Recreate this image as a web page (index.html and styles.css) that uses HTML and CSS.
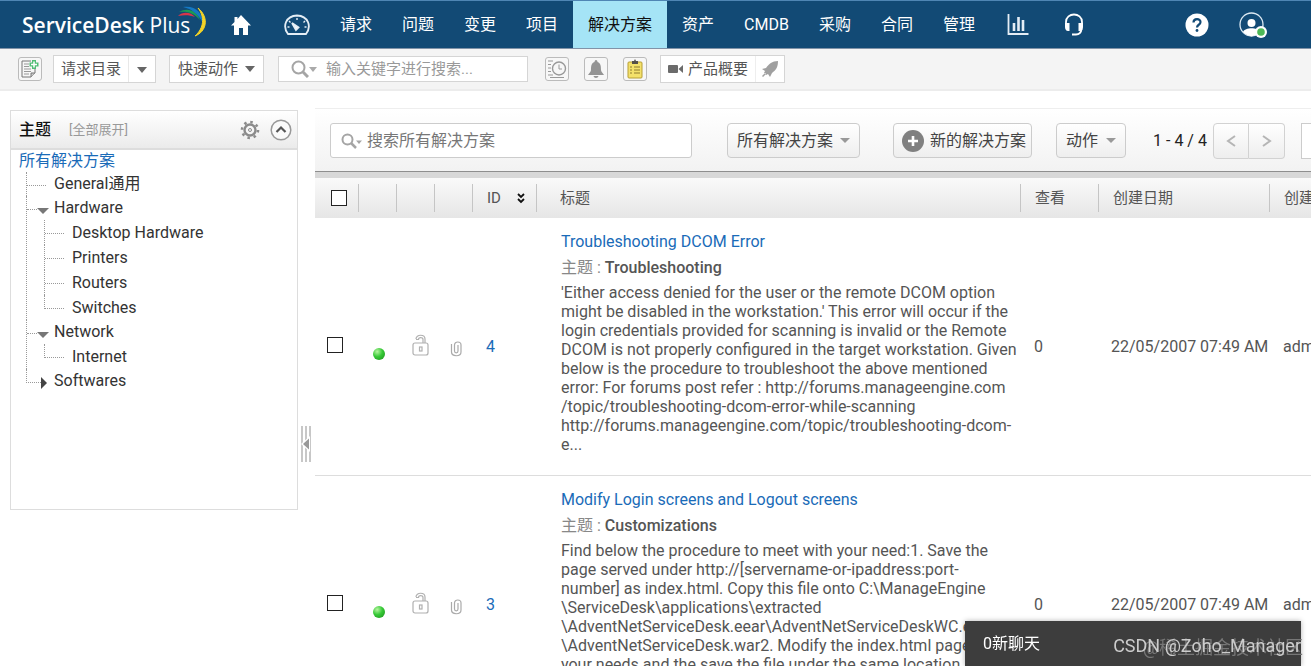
FILE: index.html
```
<!DOCTYPE html>
<html lang="zh-CN">
<head>
    <meta charset="UTF-8">
    <meta name="viewport" content="width=device-width, initial-scale=1.0">
    <title>ServiceDesk Plus</title>
    <link rel="stylesheet" href="styles.css">
</head>
<body>
    <header class="topbar">
        <a href="#" class="logo"><b>ServiceDesk</b> Plus
            <svg class="logo-arc" width="32" height="34" viewBox="0 0 32 34" fill="none">
                <path d="M2 11C7 6 15 7 19 12C14 10 8 10 2 11Z" fill="#d8354a"/>
                <path d="M3 7C12 2 21 6 24 15C18 8 11 6 3 7Z" fill="#1c9a55"/>
                <path d="M7 2C19 0 27 8 27 18C22 9 16 4 7 2Z" fill="#1579c4"/>
                <path d="M22 3C34 13 30 27 19 31C28 23 29 12 22 3Z" fill="#f3d327" stroke="#f3d327"/>
            </svg>
        </a>
        <a href="#" class="nav-icon home" aria-label="Home">
            <svg width="22" height="22" viewBox="0 0 22 22"><path d="M11 1L21 11.500H18V21H13V14H9V21H4V11.500H1L4.500 8V3H7.500V5Z" fill="#fff"/></svg>
        </a>
        <a href="#" class="nav-icon gauge" aria-label="Dashboard">
            <svg width="26" height="22" viewBox="0 0 26 22" fill="none" stroke="#e4edf5" stroke-width="1.800"><path d="M4 20C-2 12 2 2 13 1.500C24 2 28 12 22 20Z"/><path d="M13 4V6M5 7L6.500 8.500M3.500 13H5.500M21 7L19.500 8.500M22.500 13H20.500" stroke-width="1.400"/><path d="M8 9L14.500 13.500L12 16Z" fill="#fff"/></svg>
        </a>
        <nav class="nav">
            <a href="#">请求</a>
            <a href="#">问题</a>
            <a href="#">变更</a>
            <a href="#">项目</a>
            <a href="#" class="active">解决方案</a>
            <a href="#">资产</a>
            <a href="#">CMDB</a>
            <a href="#">采购</a>
            <a href="#">合同</a>
            <a href="#">管理</a>
        </nav>
        <a href="#" class="nav-icon" aria-label="Reports">
            <svg width="22" height="22" viewBox="0 0 22 22" fill="none" stroke="#e4edf5"><path d="M1.500 0V20H21.500" stroke-width="1.800"/><path d="M7 17V9M11.500 17V3M16 17V6" stroke-width="2.600"/></svg>
        </a>
        <a href="#" class="nav-icon" aria-label="Support">
            <svg width="20" height="24" viewBox="0 0 20 24" fill="none" stroke="#fff"><path d="M2 12V9C2 -1 18 -1 18 9V12" stroke-width="1.800"/><path d="M1 10H5.500V18H4C2 18 1 16 1 14ZM19 10H14.500V18H16C18 18 19 16 19 14Z" fill="#fff" stroke="none"/><path d="M17.500 16C17 20 15 21.500 12 21.500M8 21.500H13" stroke-width="2"/></svg>
        </a>
        <div class="topbar-right">
            <a href="#" aria-label="Help">
                <svg width="24" height="24" viewBox="0 0 24 24" fill="none"><circle cx="12" cy="12" r="11.500" fill="#fff"/><path d="M8.500 9.500C8.500 5 15.500 5 15.500 9C15.500 12 12 11.500 12 14.500" stroke="#124a75" stroke-width="2.200"/><circle cx="12" cy="17.500" r="1.400" fill="#124a75"/></svg>
            </a>
            <a href="#" aria-label="Profile">
                <svg width="28" height="26" viewBox="0 0 28 26"><circle cx="12.500" cy="12.500" r="11.500" fill="none" stroke="#dce9f3" stroke-width="1.300"/><circle cx="12.500" cy="11" r="4" fill="#fff"/><path d="M4 20C6 15 19 15 21 20C16 25.500 9 25.500 4 20Z" fill="#fff"/><circle cx="22" cy="20" r="6" fill="#fff"/><circle cx="22" cy="20" r="3.800" fill="#4db857"/></svg>
            </a>
        </div>
    </header>

    <div class="subbar">
        <button class="icon-btn" aria-label="New request">
            <svg width="20" height="20" viewBox="0 0 20 20" fill="none" stroke="#777"><path d="M11 2H2V18H11L15 14V10" /><path d="M4 5H9M4 7.500H9M4 10H11M4 12.500H11M4 15H9" stroke="#999"/><path d="M11 18V14H15" fill="#ccc"/><path d="M14 1V10M9.500 5.500H18.500" stroke="#52bd76" stroke-width="4"/><path d="M14 2.500V8.500M11 5.500H17" stroke="#fff" stroke-width="1.500"/></svg>
        </button>
        <div class="split-btn catalog">
            <button>请求目录</button>
            <button class="split-arrow" aria-label="展开"><span class="caret"></span></button>
        </div>
        <button class="box-btn quick">快速动作 <span class="caret"></span></button>
        <div class="top-search">
            <svg width="18" height="18" viewBox="0 0 18 18" fill="none" stroke="#a5a5a5" stroke-width="2"><circle cx="7.500" cy="7.500" r="6"/><path d="M12 12L17 17" stroke-width="3"/></svg>
            <span class="caret light"></span>
            <input type="text" placeholder="输入关键字进行搜索..." aria-label="搜索">
        </div>
        <div class="icon-group">
            <button class="icon-btn" aria-label="Recent items">
                <svg width="20" height="20" viewBox="0 0 20 20" fill="none" stroke="#999"><circle cx="12" cy="9.500" r="6.500" stroke-width="1.400"/><path d="M12 5.500V10H15M1 2H6M1 5.500H4M1 9H4M1 12.500H4M1 16H6M3 18.500H17"/></svg>
            </button>
            <button class="icon-btn" aria-label="Reminders">
                <svg width="18" height="20" viewBox="0 0 18 20" fill="#949494"><path d="M9 1C10 1 10.500 2 10.500 3C14 4 14 8 14 11C14 13 16 14 17 16H1C2 14 4 13 4 11C4 8 4 4 7.500 3C7.500 2 8 1 9 1ZM6.500 17H11.500C11 19.500 7 19.500 6.500 17Z"/></svg>
            </button>
            <button class="icon-btn" aria-label="Tasks">
                <svg width="18" height="20" viewBox="0 0 18 20"><rect x="2" y="3" width="14" height="16" rx="1" fill="#f4e16b" stroke="#b79f35"/><path d="M6 2H8L9 0L10 2H12V5H6Z" fill="#55504a"/><path d="M4 8H6M8 8H14M4 11H6M8 11H14M4 14H6M8 14H14" stroke="#8f7d30"/></svg>
            </button>
        </div>
        <div class="split-btn">
            <button class="overview"><svg width="16" height="10" viewBox="0 0 16 10" fill="#6b6b6b"><rect y="1" width="10" height="8" rx="1"/><path d="M10.500 5L15 1V9Z"/></svg>产品概要</button>
            <button class="rocket" aria-label="Getting started"><svg width="18" height="18" viewBox="0 0 18 18" fill="#a0a0a0"><path d="M17 1C11 1 8 4 5 8L1 9L4 11L3 13L5 15L7 14L9 17L11 13C15 10 17 7 17 1ZM1 16L4 13L5 14L2 17Z"/></svg></button>
        </div>
    </div>

    <div class="content">
        <aside class="sidebar">
            <div class="sidebar-head">
                <h2>主题</h2>
                <a href="#" class="expand-all">[全部展开]</a>
                <button class="plain-btn" aria-label="设置">
                    <svg width="20" height="20" viewBox="0 0 20 20" fill="none" stroke="#8b8b8b"><circle cx="10" cy="10" r="5.500" stroke-width="2.400"/><circle cx="10" cy="10" r="8" stroke-width="2.600" stroke-dasharray="2.500 3.783"/><circle cx="10" cy="10" r="1.500"/></svg>
                </button>
                <button class="plain-btn" aria-label="收起">
                    <svg width="22" height="22" viewBox="0 0 22 22" fill="none"><circle cx="11" cy="11" r="9.800" fill="#fafafa" stroke="#999" stroke-width="1.500"/><path d="M6.500 13L11 8.500L15.500 13" stroke="#555" stroke-width="2.200"/></svg>
                </button>
            </div>
            <a href="#" class="all-link">所有解决方案</a>
            <ul class="tree">
                <li><div class="node"><span class="branch"></span><a href="#">General通用</a></div></li>
                <li>
                    <div class="node open"><span class="branch"></span><a href="#">Hardware</a></div>
                    <ul>
                        <li><div class="node"><span class="branch"></span><a href="#">Desktop Hardware</a></div></li>
                        <li><div class="node"><span class="branch"></span><a href="#">Printers</a></div></li>
                        <li><div class="node"><span class="branch"></span><a href="#">Routers</a></div></li>
                        <li><div class="node"><span class="branch"></span><a href="#">Switches</a></div></li>
                    </ul>
                </li>
                <li>
                    <div class="node open"><span class="branch"></span><a href="#">Network</a></div>
                    <ul>
                        <li><div class="node"><span class="branch"></span><a href="#">Internet</a></div></li>
                    </ul>
                </li>
                <li><div class="node closed"><span class="branch"></span><a href="#">Softwares</a></div></li>
            </ul>
        </aside>

        <div class="splitter">
            <svg width="10" height="36" viewBox="0 0 10 36"><path d="M1 0V36M5 0V36M9 0V36" stroke="#b5b5b5" stroke-width="1.500"/><path d="M0 18L9 10V26Z" fill="#fff"/><path d="M2 18L8 12.500V23.500Z" fill="#999"/></svg>
        </div>

        <main class="main">
            <div class="list-bar">
                <div class="list-search">
                    <svg width="22" height="16" viewBox="0 0 22 16" fill="none" stroke="#a5a5a5" stroke-width="2"><circle cx="6.500" cy="6.500" r="5"/><path d="M10 10L15 15" stroke-width="2.500"/><path d="M15 7.500H21L18 11Z" fill="#a5a5a5" stroke="none"/></svg>
                    <input type="text" placeholder="搜索所有解决方案" aria-label="搜索所有解决方案">
                </div>
                <div class="grad-btn filter">
                    <select aria-label="筛选">
                        <option>所有解决方案</option>
                    </select>
                    <span class="caret mid"></span>
                </div>
                <button class="grad-btn new-btn">
                    <svg width="22" height="22" viewBox="0 0 22 22"><circle cx="11" cy="11" r="11" fill="#808080"/><path d="M11 6V16M6 11H16" stroke="#fff" stroke-width="2.600"/></svg>
                    新的解决方案
                </button>
                <button class="grad-btn actions">动作 <span class="caret mid"></span></button>
                <span class="count">1 - 4 / 4</span>
                <div class="pager">
                    <button aria-label="上一页"><svg width="10" height="12" viewBox="0 0 10 12" fill="none" stroke="#b5b5b5" stroke-width="2"><path d="M9 1L2 6L9 11"/></svg></button>
                    <button aria-label="下一页"><svg width="10" height="12" viewBox="0 0 10 12" fill="none" stroke="#b5b5b5" stroke-width="2"><path d="M1 1L8 6L1 11"/></svg></button>
                </div>
                <input type="text" class="page-size" aria-label="每页条数">
            </div>

            <table class="list">
                <colgroup>
                    <col class="c-check"><col class="c-icon"><col class="c-icon"><col class="c-icon">
                    <col class="c-id"><col><col class="c-views"><col class="c-date"><col class="c-by">
                </colgroup>
                <thead>
                    <tr>
                        <th class="check"><input type="checkbox" aria-label="全选"></th>
                        <th><div></div></th>
                        <th><div></div></th>
                        <th><div></div></th>
                        <th><div class="id-head">ID <svg width="8" height="11" viewBox="0 0 8 11" fill="none" stroke="#111" stroke-width="1.800"><path d="M1 1L4 4L7 1M1 6L4 9L7 6"/></svg></div></th>
                        <th><div class="title-head">标题</div></th>
                        <th><div>查看</div></th>
                        <th><div>创建日期</div></th>
                        <th><div>创建者</div></th>
                    </tr>
                </thead>
                <tbody>
                    <tr>
                        <td class="row-check"><input type="checkbox" aria-label="选择 4"></td>
                        <td class="status"><span class="dot"></span></td>
                        <td class="lock"><svg width="18" height="22" viewBox="0 0 18 22" fill="none" stroke="#b0b0b0" stroke-width="1.200"><rect x="1" y="9" width="15" height="12" rx="2"/><path d="M4 5C4 0 13 0 13 5V9M11 9V5.500C11 3 6.500 3 6.500 5.500H4"/><rect x="7.500" y="13" width="2.500" height="4"/></svg></td>
                        <td class="clip"><svg width="12" height="16" viewBox="0 0 12 16" fill="none" stroke="#aaa" stroke-width="1.200"><path d="M8 4V10C8 12.500 4.500 12.500 4.500 10V4C4.500 0 11 0 11 4V11C11 16 1.500 16 1.500 11V3"/></svg></td>
                        <td class="id"><a href="#">4</a></td>
                        <td class="title">
                            <a href="#">Troubleshooting DCOM Error</a>
                            <p class="topic">主题 : <b>Troubleshooting</b></p>
                            <p class="text">'Either access denied for the user or the remote DCOM option<br>
                                might be disabled in the workstation.' This error will occur if the<br>
                                login credentials provided for scanning is invalid or the Remote<br>
                                DCOM is not properly configured in the target workstation. Given<br>
                                below is the procedure to troubleshoot the above mentioned<br>
                                error: For forums post refer : http://forums.manageengine.com<br>
                                /topic/troubleshooting-dcom-error-while-scanning<br>
                                http://forums.manageengine.com/topic/troubleshooting-dcom-<br>
                                e...</p>
                        </td>
                        <td class="views">0</td>
                        <td class="date">22/05/2007 07:49 AM</td>
                        <td class="by">administrator</td>
                    </tr>
                    <tr>
                        <td class="row-check"><input type="checkbox" aria-label="选择 3"></td>
                        <td class="status"><span class="dot"></span></td>
                        <td class="lock"><svg width="18" height="22" viewBox="0 0 18 22" fill="none" stroke="#b0b0b0" stroke-width="1.200"><rect x="1" y="9" width="15" height="12" rx="2"/><path d="M4 5C4 0 13 0 13 5V9M11 9V5.500C11 3 6.500 3 6.500 5.500H4"/><rect x="7.500" y="13" width="2.500" height="4"/></svg></td>
                        <td class="clip"><svg width="12" height="16" viewBox="0 0 12 16" fill="none" stroke="#aaa" stroke-width="1.200"><path d="M8 4V10C8 12.500 4.500 12.500 4.500 10V4C4.500 0 11 0 11 4V11C11 16 1.500 16 1.500 11V3"/></svg></td>
                        <td class="id"><a href="#">3</a></td>
                        <td class="title">
                            <a href="#">Modify Login screens and Logout screens</a>
                            <p class="topic">主题 : <b>Customizations</b></p>
                            <p class="text">Find below the procedure to meet with your need:1. Save the<br>
                                page served under http://[servername-or-ipaddress:port-<br>
                                number] as index.html. Copy this file onto C:\ManageEngine<br>
                                \ServiceDesk\applications\extracted<br>
                                \AdventNetServiceDesk.eear\AdventNetServiceDeskWC.ear<br>
                                \AdventNetServiceDesk.war2. Modify the index.html page to<br>
                                your needs and the save the file under the same location.<br>
                                3. Restart the ServiceDesk Plus server for the changes<br>
                                to take effect...</p>
                        </td>
                        <td class="views">0</td>
                        <td class="date">22/05/2007 07:49 AM</td>
                        <td class="by">administrator</td>
                    </tr>
                </tbody>
            </table>
        </main>
    </div>

    <div class="chat-bar">
        <button>0新聊天</button>
    </div>
    <div class="mark mark-back">@稀土掘金技术社区</div>
    <div class="mark">CSDN @Zoho_Manager</div>
</body>
</html>
```

FILE: styles.css
```
* { box-sizing: border-box; }
body {
    margin: 0;
    height: 100vh;
    overflow: hidden;
    display: flex;
    flex-direction: column;
    font-family: Roboto, "Noto Sans CJK SC", sans-serif;
    font-size: 15px;
    line-height: 20px;
    color: #555;
    background: #fff;
}
a { color: #1a6bb8; text-decoration: none; }
p, h2, ul { margin: 0; padding: 0; }
ul { list-style: none; }
svg { display: block; flex: none; }
button, input, select { font: inherit; color: inherit; }
button { background: none; border: 0; padding: 0; cursor: pointer; white-space: nowrap; }
input[type="text"] { border: 0; outline: 0; padding: 0; background: none; min-width: 0; }
input::placeholder { color: #999; opacity: 1; }

.caret {
    display: inline-block;
    vertical-align: middle;
    border: 5px solid transparent;
    border-top: 6px solid #666;
    border-bottom: 0;
}
.caret.mid { border-width: 5px 5px 0; border-top-color: #999; }
.caret.light { border-width: 5px 4px 0; border-top-color: #aaa; }

/* top navigation */
.topbar {
    flex: none;
    display: flex;
    align-items: center;
    height: 49px;
    background: #124a75;
    border-top: 1px solid #4f86b4;
    border-bottom: 1px solid #8193a8;
}
.logo {
    position: relative;
    width: 208px;
    margin-right: 10px;
    padding-left: 22px;
    color: #fff;
    font-family: "Open Sans", sans-serif;
    font-size: 21px;
    line-height: 28px;
    font-weight: 400;
    white-space: nowrap;
}
.logo b { font-weight: 600; }
.logo-arc { position: absolute; right: 0; top: -6px; }
.nav-icon { flex: none; width: 56px; display: flex; justify-content: center; }
.nav-icon.home { width: 46px; }
.nav-icon.gauge { width: 61px; padding-left: 5px; }
.nav { display: flex; height: 100%; }
.nav a {
    display: flex;
    align-items: center;
    padding: 0 15px;
    color: #fff;
    font-size: 16px;
    white-space: nowrap;
}
.nav a.active { background: #a5e4f6; color: #111; }
.topbar-right { display: flex; align-items: center; gap: 30px; margin-left: auto; padding-right: 44px; }

/* tool strip */
.subbar {
    flex: none;
    display: flex;
    align-items: center;
    height: 42px;
    padding: 0 18px;
    background: #f4f4f4;
    border-bottom: 2px solid #ececec;
}
.icon-btn {
    width: 24px;
    height: 24px;
    display: flex;
    align-items: center;
    justify-content: center;
    background: #f7f7f7;
    border: 1px solid #bbb;
    border-radius: 3px;
}
.split-btn, .box-btn, .top-search {
    display: flex;
    align-items: center;
    height: 28px;
    background: #fff;
    border: 1px solid #d5d5d5;
}
.split-btn button { height: 100%; padding: 0 7px; }
.split-btn .split-arrow { padding: 0 8px; border-left: 1px solid #e8e8e8; }
.catalog { margin-left: 11px; }
.quick { gap: 7px; margin-left: 13px; padding: 0 8px; }
.top-search { width: 250px; height: 26px; margin-left: 14px; padding-left: 12px; }
.top-search input { flex: 1; margin-left: 9px; }
.icon-group { display: flex; gap: 15px; margin: 0 13px 0 17px; }
.split-btn .overview { display: flex; align-items: center; gap: 4px; }
.split-btn .rocket { border-left: 1px solid #eee; padding: 0 5px; }

.content { flex: 1; min-height: 0; display: flex; align-items: flex-start; padding: 17px 0 0 10px; }

/* topics */
.sidebar {
    flex: none;
    width: 288px;
    min-height: 400px;
    margin-top: 2px;
    border: 1px solid #ddd;
}
.sidebar-head {
    display: flex;
    align-items: center;
    height: 39px;
    padding: 0 5px 0 8px;
    background: linear-gradient(#fff, #ebebeb);
    border-bottom: 2px solid #ddd;
}
.sidebar-head h2 { font-size: 16px; font-weight: 500; color: #111; }
.expand-all { flex: 1; margin-left: 18px; font-size: 13px; color: #999; }
.plain-btn + .plain-btn { margin-left: 10px; }
.all-link { display: block; padding-left: 8px; font-size: 16px; line-height: 22px; }
.tree { padding-left: 15px; font-size: 16px; }
.tree ul { padding-left: 17px; }
.tree li { border-left: 1px dotted #999; }
.tree li:last-child { border-left: 0; }
.node { display: flex; height: 24px; align-items: center; }
.tree ul .node { height: 25px; }
.node a { order: 2; color: #333; line-height: 24px; white-space: nowrap; }
.branch { width: 19px; height: 14px; align-self: flex-start; margin-right: 8px; border-bottom: 1px dotted #999; }
.tree li:last-child > .node .branch { width: 20px; border-left: 1px dotted #999; }
.node.open .branch, .node.closed .branch { width: 10px; margin-right: 0; }
.tree li:last-child > .node.closed .branch { width: 15px; margin-right: 0; }
.node.open::after, .node.closed::after { content: ""; order: 1; }
.node.open::after { border: 6px solid transparent; border-top-color: #777; border-bottom: 0; margin: 6px 5px 0 0; }
.node.closed::after { border: 6px solid transparent; border-left-color: #444; border-right: 0; margin: 4px 7px 0 0; }

.splitter { flex: none; width: 17px; padding: 318px 0 0 3px; }

/* solution list */
.main { flex: 1; min-width: 0; overflow: hidden; align-self: stretch; }
.list-bar {
    display: flex;
    align-items: center;
    width: calc(100% + 60px);
    height: 70px;
    padding: 0 0 4px 15px;
    background: linear-gradient(#fff, #f2f2f2);
    border-top: 1px solid #eee;
    border-bottom: 6px solid #d8d8d8;
    box-shadow: inset 0 -1px 0 #8e8e8e;
    color: #444;
    font-size: 16px;
}
.list-bar > * { flex: none; }
.list-bar .list-search {
    flex: 1 1 362px;
    max-width: 362px;
    height: 35px;
    display: flex;
    align-items: center;
    padding-left: 10px;
    background: #fff;
    border: 1px solid #ccc;
    border-radius: 3px;
}
.list-search input { flex: 1; margin-left: 4px; }
.list-search input::placeholder { color: #777; }
.list-bar > * { margin-top: 4px; }
.grad-btn {
    display: flex;
    align-items: center;
    height: 35px;
    padding: 0 9px;
    background: linear-gradient(#fff, #eee);
    border: 1px solid #ccc;
    border-radius: 4px;
}
.filter { margin-left: 35px; }
.filter select { appearance: none; border: 0; background: none; padding: 0; margin-right: 6px; outline: 0; }
.new-btn { margin-left: 33px; padding: 0 5px 0 8px; gap: 6px; }
.actions { gap: 8px; margin-left: 24px; }
.count { width: 60px; margin-left: 27px; color: #222; white-space: nowrap; }
.pager { display: flex; }
.pager button {
    width: 36px;
    height: 36px;
    display: flex;
    align-items: center;
    justify-content: center;
    background: linear-gradient(#fff, #eee);
    border: 1px solid #d2d2d2;
    border-radius: 4px 0 0 4px;
}
.pager button + button { border-left: 0; border-radius: 0 4px 4px 0; }
.list-bar .page-size { width: 60px; height: 36px; margin-left: 16px; background: #fff; border: 1px solid #ccc; }

.list { table-layout: fixed; width: calc(100% + 89px); border-collapse: collapse; }
.c-check { width: 43px; }
.c-icon { width: 38px; }
.c-id { width: 64px; }
.c-views { width: 78px; }
.c-date { width: 171px; }
.c-by { width: 131px; }
.list th { height: 40px; padding: 0; font-weight: 400; text-align: left; }
.list thead tr { background: linear-gradient(#fafafa, #e6e6e6); }
.list th div {
    display: flex;
    align-items: center;
    height: 28px;
    padding-left: 14px;
    border-left: 1px solid #c5c5c5;
}
.list th .id-head { gap: 16px; }
.list th .title-head { padding-left: 23px; }
.list tbody tr { border-bottom: 1px solid #ddd; }
.list td { padding: 0 0 0 14px; vertical-align: middle; white-space: nowrap; font-size: 16px; }
.list input[type="checkbox"] {
    appearance: none;
    display: block;
    width: 16px;
    height: 16px;
    margin: 0;
    background: #fff;
    border: 1px solid #222;
}
.list th.check { padding-left: 16px; }
.list td.row-check { padding: 0 0 4px 12px; }
.list .status { padding: 14px 0 0 15px; }
.dot {
    display: block;
    width: 12px;
    height: 12px;
    border-radius: 50%;
    background: radial-gradient(circle at 35% 30%, #b6f5a0, #36c936 45%, #1c8d1c);
}
.list .lock { padding: 0 0 4px 16px; }
.list .clip { padding: 4px 0 0 16px; }
.list .title { padding: 11px 0 21px 25px; }
.title a { display: block; line-height: 26px; }
.topic { line-height: 26px; color: #888; }
.topic b { font-weight: 500; color: #555; }
.text { padding-top: 2px; line-height: 19px; }
.list .date { padding-left: 13px; }

/* chat */
.chat-bar {
    position: fixed;
    right: 10px;
    bottom: 0;
    width: 336px;
    height: 45px;
    padding-left: 18px;
    display: flex;
    align-items: center;
    background: #3d3d3d;
    color: #fff;
    font-size: 16px;
    box-shadow: 0 0 5px rgba(0, 0, 0, 0.3);
}
.mark { position: fixed; right: 10px; bottom: 8px; font-size: 18px; line-height: 24px; color: #ccc; }
.mark-back { right: 8px; bottom: 6px; color: #777; }
```
